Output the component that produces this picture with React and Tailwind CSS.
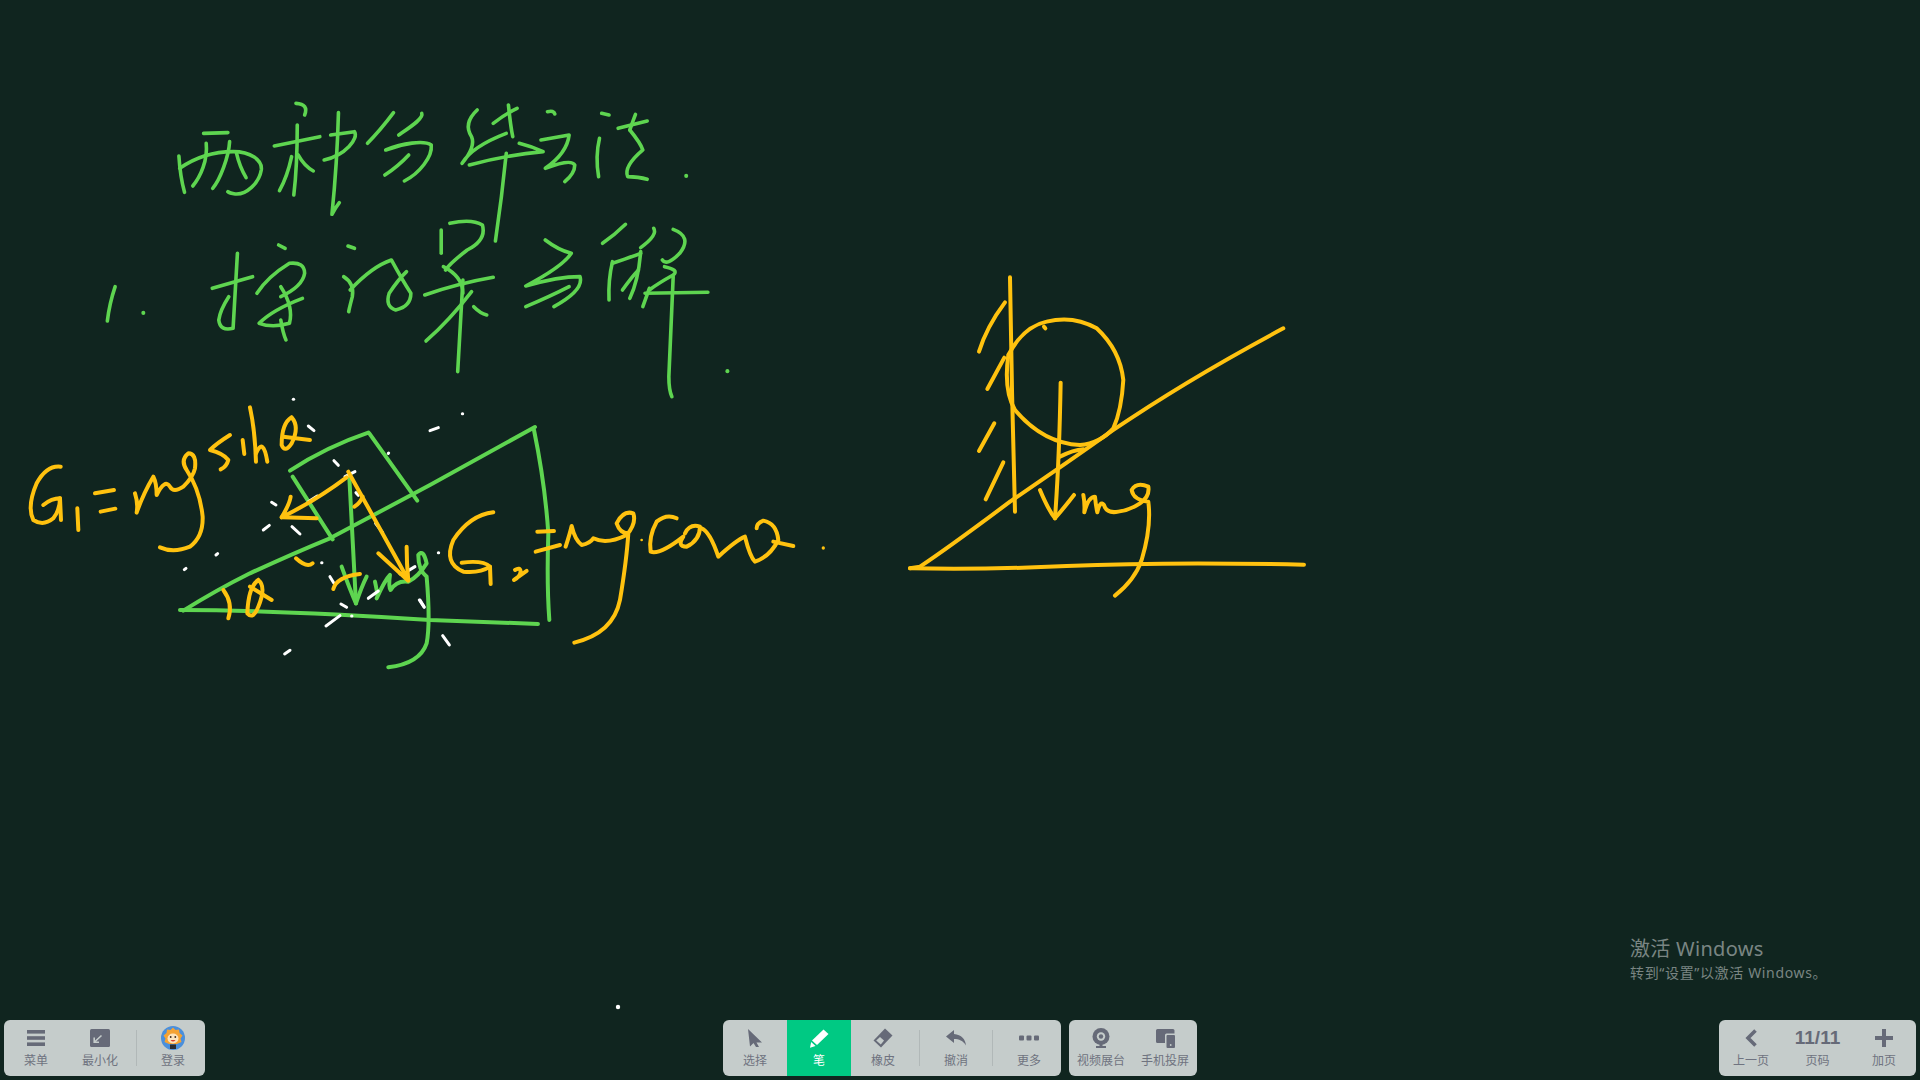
const GREEN = '#5ed550';
const YELLOW = '#ffc20f';

// ink strokes, each group kept in the coords of the crop it was read from
const titleInk = [
  // 两
  'M262 160 L318 158', 'M205 228 Q208 290 218 337',
  'M207 265 C240 235 280 215 330 215 C370 215 398 240 395 270 C390 310 360 345 335 342 Q322 340 318 335',
  'M268 190 C272 240 255 290 237 318', 'M322 185 C320 230 300 300 283 325', 'M338 220 Q345 260 360 293',
  // 种
  'M475 70 Q505 72 495 105', 'M425 198 L530 170', 'M478 135 Q478 260 470 345', 'M465 230 Q455 290 437 332',
  'M480 225 Q495 260 515 273', 'M555 165 L610 155 C620 175 590 225 540 240', 'M573 98 Q570 250 558 403 Q565 385 575 368',
  // 分
  'M700 98 Q670 150 640 190', 'M765 100 C770 115 740 140 712 165', 'M682 210 C720 190 770 180 787 195 C790 230 760 280 725 303',
  'M735 225 Q710 260 680 285',
  // 解
  'M893 90 Q860 130 880 170 Q890 200 858 250 Q880 200 960 160', 'M985 85 Q960 100 930 130', 'M965 75 Q970 140 975 170',
  'M875 255 Q960 225 1045 215 Q1020 200 990 190', 'M960 220 Q950 350 935 483',
  // 方
  'M1055 95 Q1070 90 1072 102', 'M1040 180 L1105 165 Q1100 220 1050 265 Q1110 235 1118 255 Q1118 280 1095 305',
  // 法
  'M1180 100 L1197 105', 'M1175 175 Q1165 230 1173 290', 'M1258 103 Q1250 130 1245 150', 'M1218 145 L1285 123',
  'M1245 150 Q1270 190 1275 210 Q1230 260 1240 290 Q1265 290 1285 298',
  // 1.
  'M58 620 Q45 670 40 723',
  // 按
  'M340 520 Q335 640 330 745 Q300 755 297 720 Q300 690 320 650', 'M282 625 L375 590', 'M435 495 L450 505',
  'M385 640 Q410 590 460 550 Q495 545 495 580 Q490 620 440 650',
  'M490 655 Q420 690 390 730 Q420 745 460 730 Q470 680 440 620', 'M440 720 Q445 760 452 780',
  // 效
  'M595 498 L610 505', 'M585 590 Q610 610 605 650 Q595 700 597 695',
  'M600 630 Q650 560 695 540 Q720 600 740 640 Q740 680 705 690 Q680 680 690 640 Q710 600 730 575',
  // 果
  'M810 450 L810 520', 'M830 430 Q880 415 905 435 Q915 480 870 510 Q830 550 820 570', 'M815 560 Q860 590 860 640',
  'M772 645 Q850 610 930 592', 'M860 600 L848 875', 'M880 635 Q830 720 775 783', 'M885 680 Q900 700 915 705',
  // 分
  'M1050 480 Q1080 510 1110 520 Q1090 560 1005 618 Q1080 590 1130 590 Q1140 630 1070 680', 'M1105 620 Q1060 650 1005 680',
  // 解
  'M1235 433 Q1210 465 1182 490', 'M1300 445 Q1310 465 1270 503', 'M1205 545 Q1195 600 1197 660', 'M1205 550 Q1250 530 1270 520',
  'M1270 515 Q1265 600 1245 655', 'M1228 630 Q1250 590 1265 570', 'M1345 448 Q1390 470 1360 520 Q1330 560 1320 540',
  'M1325 560 Q1360 570 1345 585 Q1310 610 1290 630', 'M1280 640 L1425 637', 'M1290 625 L1275 680',
  'M1345 590 Q1340 750 1335 890 Q1335 930 1342 950',
];
const titleDots = [[1375, 287], [123, 698], [1470, 873]];

const leftGreen = [
  'M840 242 Q950 170 1075 128', 'M1078 130 L1222 332', 'M848 260 L968 448',
  'M520 662 Q620 600 720 550 Q850 490 960 445 Q1100 370 1260 285 L1575 111',
  'M510 660 Q800 660 1260 690 L1584 702',
  'M1018 260 L1038 640', 'M995 530 Q1020 600 1038 640 Q1055 590 1070 560',
  'M1095 575 Q1105 620 1100 625 Q1125 570 1140 555 Q1135 590 1142 600 Q1160 570 1195 575 Q1225 560 1250 520 Q1240 475 1225 495 Q1225 540 1250 560 Q1262 700 1250 760 Q1230 820 1135 832',
];
const leftYellow = [
  'M152 230 Q110 225 80 280 Q50 350 70 390 Q100 410 130 385 Q150 360 150 325 Q125 325 100 345', 'M150 325 L153 390',
  'M202 355 L205 420', 'M255 310 L312 300', 'M272 365 L316 356',
  'M375 310 Q385 340 380 368 Q400 310 430 260 Q440 280 440 315 Q465 265 480 290 Q490 310 520 290 Q550 260 555 235 Q560 190 535 190 Q510 210 530 240 Q570 300 578 380 Q580 440 540 470 Q490 490 450 472',
  'M660 135 Q620 160 600 180 Q640 190 655 210 Q650 230 632 238', 'M698 150 L703 192',
  'M720 52 Q735 120 738 215', 'M738 190 Q760 140 772 215',
  'M845 82 Q815 100 815 165 Q825 190 845 160 Q870 110 845 82', 'M820 140 L900 150',
  'M1010 262 Q920 330 815 382 Q840 340 842 320', 'M815 382 L920 385',
  'M1015 245 L1195 570', 'M1105 490 L1195 572 Q1190 520 1190 470',
  'M1033 350 Q1050 340 1058 320', 'M858 505 Q890 535 908 520', 'M970 597 Q980 560 1050 552',
  'M640 600 Q670 640 655 685', 'M745 570 Q715 590 712 670 Q730 690 745 650 Q770 590 745 570', 'M720 590 L785 630',
];
const leftWhite = [
  'M850 28 L851 28', 'M895 108 L912 122', 'M1135 190 L1136 189', 'M972 212 L985 226', 'M1005 260 L1035 245', 'M785 337 L798 345',
  'M895 335 L922 318', 'M1038 308 L1045 316', 'M760 420 L778 406', 'M846 410 L870 432', 'M1097 400 L1118 428', 'M618 495 L623 491',
  'M523 539 L528 535', 'M935 518 L936 518', 'M960 560 L972 580', 'M1075 625 L1105 603', 'M1195 542 L1215 530', 'M993 642 L1010 652',
  'M1025 678 L1026 678', 'M948 708 L990 677', 'M1228 630 L1243 652', 'M824 792 L840 781', 'M1170 552 L1185 548',
];

const midGreen = ['M342 90 Q375 250 385 400 Q380 550 388 660'];
const midYellow = [
  'M220 337 Q150 345 100 420 Q70 490 130 515 Q180 520 210 500 Q190 480 125 488', 'M210 500 L212 552',
  'M285 510 Q300 500 302 515 Q300 530 282 540 L320 513', 'M352 395 L402 393', 'M347 455 L420 435',
  'M437 440 Q450 400 455 378 Q465 420 485 435 Q510 430 520 415 Q560 435 620 405 Q650 370 640 340 Q610 330 590 370 Q600 400 625 400 Q620 480 600 600 Q580 700 463 728',
  'M770 355 Q740 340 710 365 Q685 410 692 455 Q720 465 790 410 Q770 440 800 440 Q840 420 840 380 Q810 370 795 400',
  'M845 385 Q870 395 895 470 Q950 420 975 410 Q990 470 1005 485 Q1050 470 1075 420 Q1070 370 1030 362 Q1010 370 1010 385',
  'M1060 425 L1120 438',
];
const midWhite = ['M127 41 L128 41', 'M30 92 L55 83', 'M55 458 L56 458', 'M0 600 L12 620', 'M68 707 L88 735'];

const rightYellow = [
  'M330 52 Q335 400 345 755', 'M315 127 Q260 200 237 275', 'M313 293 L262 387', 'M283 490 L237 573', 'M310 607 L257 718',
  'M325 285 Q370 200 440 185 Q520 165 590 205 Q660 270 670 360 Q665 450 640 505 Q600 550 540 555 Q430 550 345 450 Q310 390 325 285',
  'M432 200 L436 205', 'M482 368 Q478 600 465 775', 'M420 690 Q445 750 465 775 Q495 740 522 705', 'M480 590 Q520 570 550 568',
  'M30 925 L60 920 Q150 860 330 725 Q500 610 640 510 Q860 360 1150 205',
  'M30 925 Q250 930 500 918 Q800 905 1212 914',
  'M550 705 Q555 730 553 757 Q565 710 585 710 Q588 740 592 757 Q600 720 612 735 Q620 762 655 755 Q690 750 720 730 Q750 710 745 680 Q710 665 695 690 Q700 720 745 725 Q755 800 725 900 Q705 960 645 1007',
];

function Ink({ d, color, width = 4 }) {
  return d.map((p, i) => (
    <path key={i} d={p} fill="none" stroke={color} strokeWidth={width} strokeLinecap="round" strokeLinejoin="round" vectorEffect="non-scaling-stroke" />
  ));
}

function Board() {
  return (
    <svg className="absolute inset-0 w-full h-full" viewBox="0 0 1920 1080">
      <g transform="translate(90 80) scale(0.4336 0.3333)">
        <Ink d={titleInk} color={GREEN} width={3.6} />
        {titleDots.map(([x, y]) => (
          <path key={x} d={`M${x} ${y} L${x} ${y + 1}`} stroke={GREEN} strokeWidth={4} strokeLinecap="round" vectorEffect="non-scaling-stroke" />
        ))}
      </g>
      <g transform="translate(10 390) scale(0.3333)">
        <Ink d={leftGreen} color={GREEN} />
        <Ink d={leftWhite} color="#ffffff" width={3} />
        <Ink d={leftYellow} color={YELLOW} />
      </g>
      <g transform="translate(420 400) scale(0.3333)">
        <Ink d={midGreen} color={GREEN} />
        <Ink d={midWhite} color="#ffffff" width={3} />
        <Ink d={midYellow} color={YELLOW} />
        <circle cx="1210" cy="444" r="5" fill={YELLOW} />
        <circle cx="665" cy="420" r="4" fill={YELLOW} />
      </g>
      <g transform="translate(900 260) scale(0.3333)">
        <Ink d={rightYellow} color={YELLOW} />
      </g>
      <circle cx="618" cy="1007" r="2.2" fill="#ffffff" />
    </svg>
  );
}

const ICON = '#666a78';

const MenuIcon = () => (
  <svg width="18" height="16" viewBox="0 0 18 16" fill={ICON}>
    <rect y="0" width="18" height="3.6" /><rect y="6.2" width="18" height="3.6" /><rect y="12.4" width="18" height="3.6" />
  </svg>
);
const MinimizeIcon = () => (
  <svg width="20" height="18" viewBox="0 0 20 18">
    <rect width="20" height="18" rx="1.5" fill={ICON} />
    <path d="M11.5 6.5 L4.5 13 M4.2 8.5 V13.3 H9" fill="none" stroke="#c5cccb" strokeWidth="1.6" />
  </svg>
);
const AvatarIcon = () => (
  <svg width="24" height="24" viewBox="0 0 24 24">
    <circle cx="12" cy="12" r="12" fill="#4a8fdc" />
    <path d="M12 1.5 L14.5 4 L18 3.5 L18.5 7 L21.5 9.5 L19.5 12.5 L20.5 16 L16 18 H8 L3.5 16 L4.5 12.5 L2.5 9.5 L5.5 7 L6 3.5 L9.5 4 Z" fill="#f5a233" />
    <ellipse cx="12" cy="12.5" rx="5.5" ry="5" fill="#fde3bd" />
    <circle cx="9.7" cy="11" r="0.9" fill="#3a2a20" /><circle cx="14.3" cy="11" r="0.9" fill="#3a2a20" />
    <path d="M9.5 14 Q12 17 14.5 14 Z" fill="#d8402f" />
    <rect x="9" y="18.5" width="6" height="4.5" fill="#2c2c30" />
  </svg>
);
const CursorIcon = () => (
  <svg width="16" height="18" viewBox="0 0 16 18" fill={ICON}>
    <path d="M1 0 L15 13.5 H9.5 L12 18 L9 18 L6.5 14 L3 17.5 Z" />
  </svg>
);
const PenIcon = () => (
  <svg width="19" height="19" viewBox="0 0 19 19" fill="#ffffff">
    <path d="M13.5 0.5 L18.5 5 L7 16 L2 11.5 Z" />
    <path d="M1.2 13 L5.5 17 L0 18.8 Z" />
  </svg>
);
const EraserIcon = () => (
  <svg width="20" height="20" viewBox="0 0 20 20">
    <path d="M12 0.5 L19.5 7.5 L8 19.5 L0.5 12.5 Z" fill={ICON} />
    <path d="M3.2 12.4 L7 9 L11 12.6 L7.8 16.4 Z" fill="#c5cccb" />
  </svg>
);
const UndoIcon = () => (
  <svg width="20" height="16" viewBox="0 0 20 16" fill={ICON}>
    <path d="M8 0 L0 6.6 L8 13 V9 C13 9 17 10.5 20 15.5 C19.5 9.5 15.5 4.5 8 4 Z" />
  </svg>
);
const MoreIcon = () => (
  <svg width="20" height="6" viewBox="0 0 20 6" fill={ICON}>
    <rect width="5" height="5" y="0.5" rx="1" /><rect x="7.5" y="0.5" width="5" height="5" rx="1" /><rect x="15" y="0.5" width="5" height="5" rx="1" />
  </svg>
);
const CameraIcon = () => (
  <svg width="18" height="20" viewBox="0 0 18 20">
    <circle cx="9" cy="8.5" r="8.5" fill={ICON} />
    <circle cx="9" cy="8.5" r="4.2" fill="#c5cccb" />
    <circle cx="9" cy="8.5" r="2.2" fill={ICON} />
    <path d="M4 18 H14 V20 H4 Z M7.5 16 H10.5 V18 H7.5 Z" fill={ICON} />
  </svg>
);
const CastIcon = () => (
  <svg width="19" height="19" viewBox="0 0 19 19">
    <path d="M1.5 0 H17 A1.5 1.5 0 0 1 18.5 1.5 V4.5 H10.5 A1.5 1.5 0 0 0 9 6 V14 H1.5 A1.5 1.5 0 0 1 0 12.5 V1.5 A1.5 1.5 0 0 1 1.5 0 Z" fill={ICON} />
    <rect x="10.5" y="6" width="8.5" height="13" rx="1" fill={ICON} />
    <circle cx="14.7" cy="16" r="0.9" fill="#c5cccb" />
  </svg>
);
const ChevronIcon = () => (
  <svg width="12" height="18" viewBox="0 0 12 18" fill="none" stroke={ICON} strokeWidth="3.6">
    <path d="M10.5 1.5 L3 9 L10.5 16.5" />
  </svg>
);
const PlusIcon = () => (
  <svg width="18" height="18" viewBox="0 0 18 18" fill={ICON}>
    <rect x="7" width="4" height="18" /><rect y="7" width="18" height="4" />
  </svg>
);

function ToolButton({ icon, label, active }) {
  return (
    <button className={`w-16 h-14 flex flex-col items-center ${active ? 'bg-[#00c983] text-white' : 'text-[#6f7380]'}`}>
      <span className="h-[34px] pb-[1px] pt-[3px] flex items-center justify-center">{icon}</span>
      <span className="text-xs leading-[14px]">{label}</span>
    </button>
  );
}

const Divider = () => <div className="w-px h-9 mx-1 self-center bg-[#b1b8b8]" />;

function Group({ children, className = '' }) {
  return <div className={`flex h-14 rounded-md overflow-hidden bg-[#c5cccb] ${className}`}>{children}</div>;
}

export default function App() {
  return (
    <div className="relative w-screen h-screen overflow-hidden flex flex-col justify-end bg-[#10251f] font-['Liberation_Sans','Noto_Sans_CJK_SC',sans-serif]">
      <Board />

      {/* activation watermark */}
      <div className="absolute left-[1630px] top-[936px] text-[#7a8583] font-['Noto_Sans','Noto_Sans_CJK_SC',sans-serif]">
        <div className="text-xl leading-[26px] tracking-[0.3px]">激活 Windows</div>
        <div className="text-sm leading-[20px] mt-[1px] tracking-[0.65px]">转到“设置”以激活 Windows。</div>
      </div>

      <div className="relative grid grid-cols-[1fr_auto_1fr] px-1 pb-1">
        <Group className="justify-self-start">
          <ToolButton icon={<MenuIcon />} label="菜单" />
          <ToolButton icon={<MinimizeIcon />} label="最小化" />
          <Divider />
          <ToolButton icon={<AvatarIcon />} label="登录" />
        </Group>

        <div className="flex gap-2">
          <Group>
            <ToolButton icon={<CursorIcon />} label="选择" />
            <ToolButton icon={<PenIcon />} label="笔" active />
            <ToolButton icon={<EraserIcon />} label="橡皮" />
            <Divider />
            <ToolButton icon={<UndoIcon />} label="撤消" />
            <Divider />
            <ToolButton icon={<MoreIcon />} label="更多" />
          </Group>
          <Group>
            <ToolButton icon={<CameraIcon />} label="视频展台" />
            <ToolButton icon={<CastIcon />} label="手机投屏" />
          </Group>
        </div>

        <Group className="justify-self-end w-[197px] justify-between">
          <ToolButton icon={<ChevronIcon />} label="上一页" />
          <ToolButton icon={<span className="text-[19px] font-bold text-[#666a78]">11/11</span>} label="页码" />
          <ToolButton icon={<PlusIcon />} label="加页" />
        </Group>
      </div>
    </div>
  );
}
